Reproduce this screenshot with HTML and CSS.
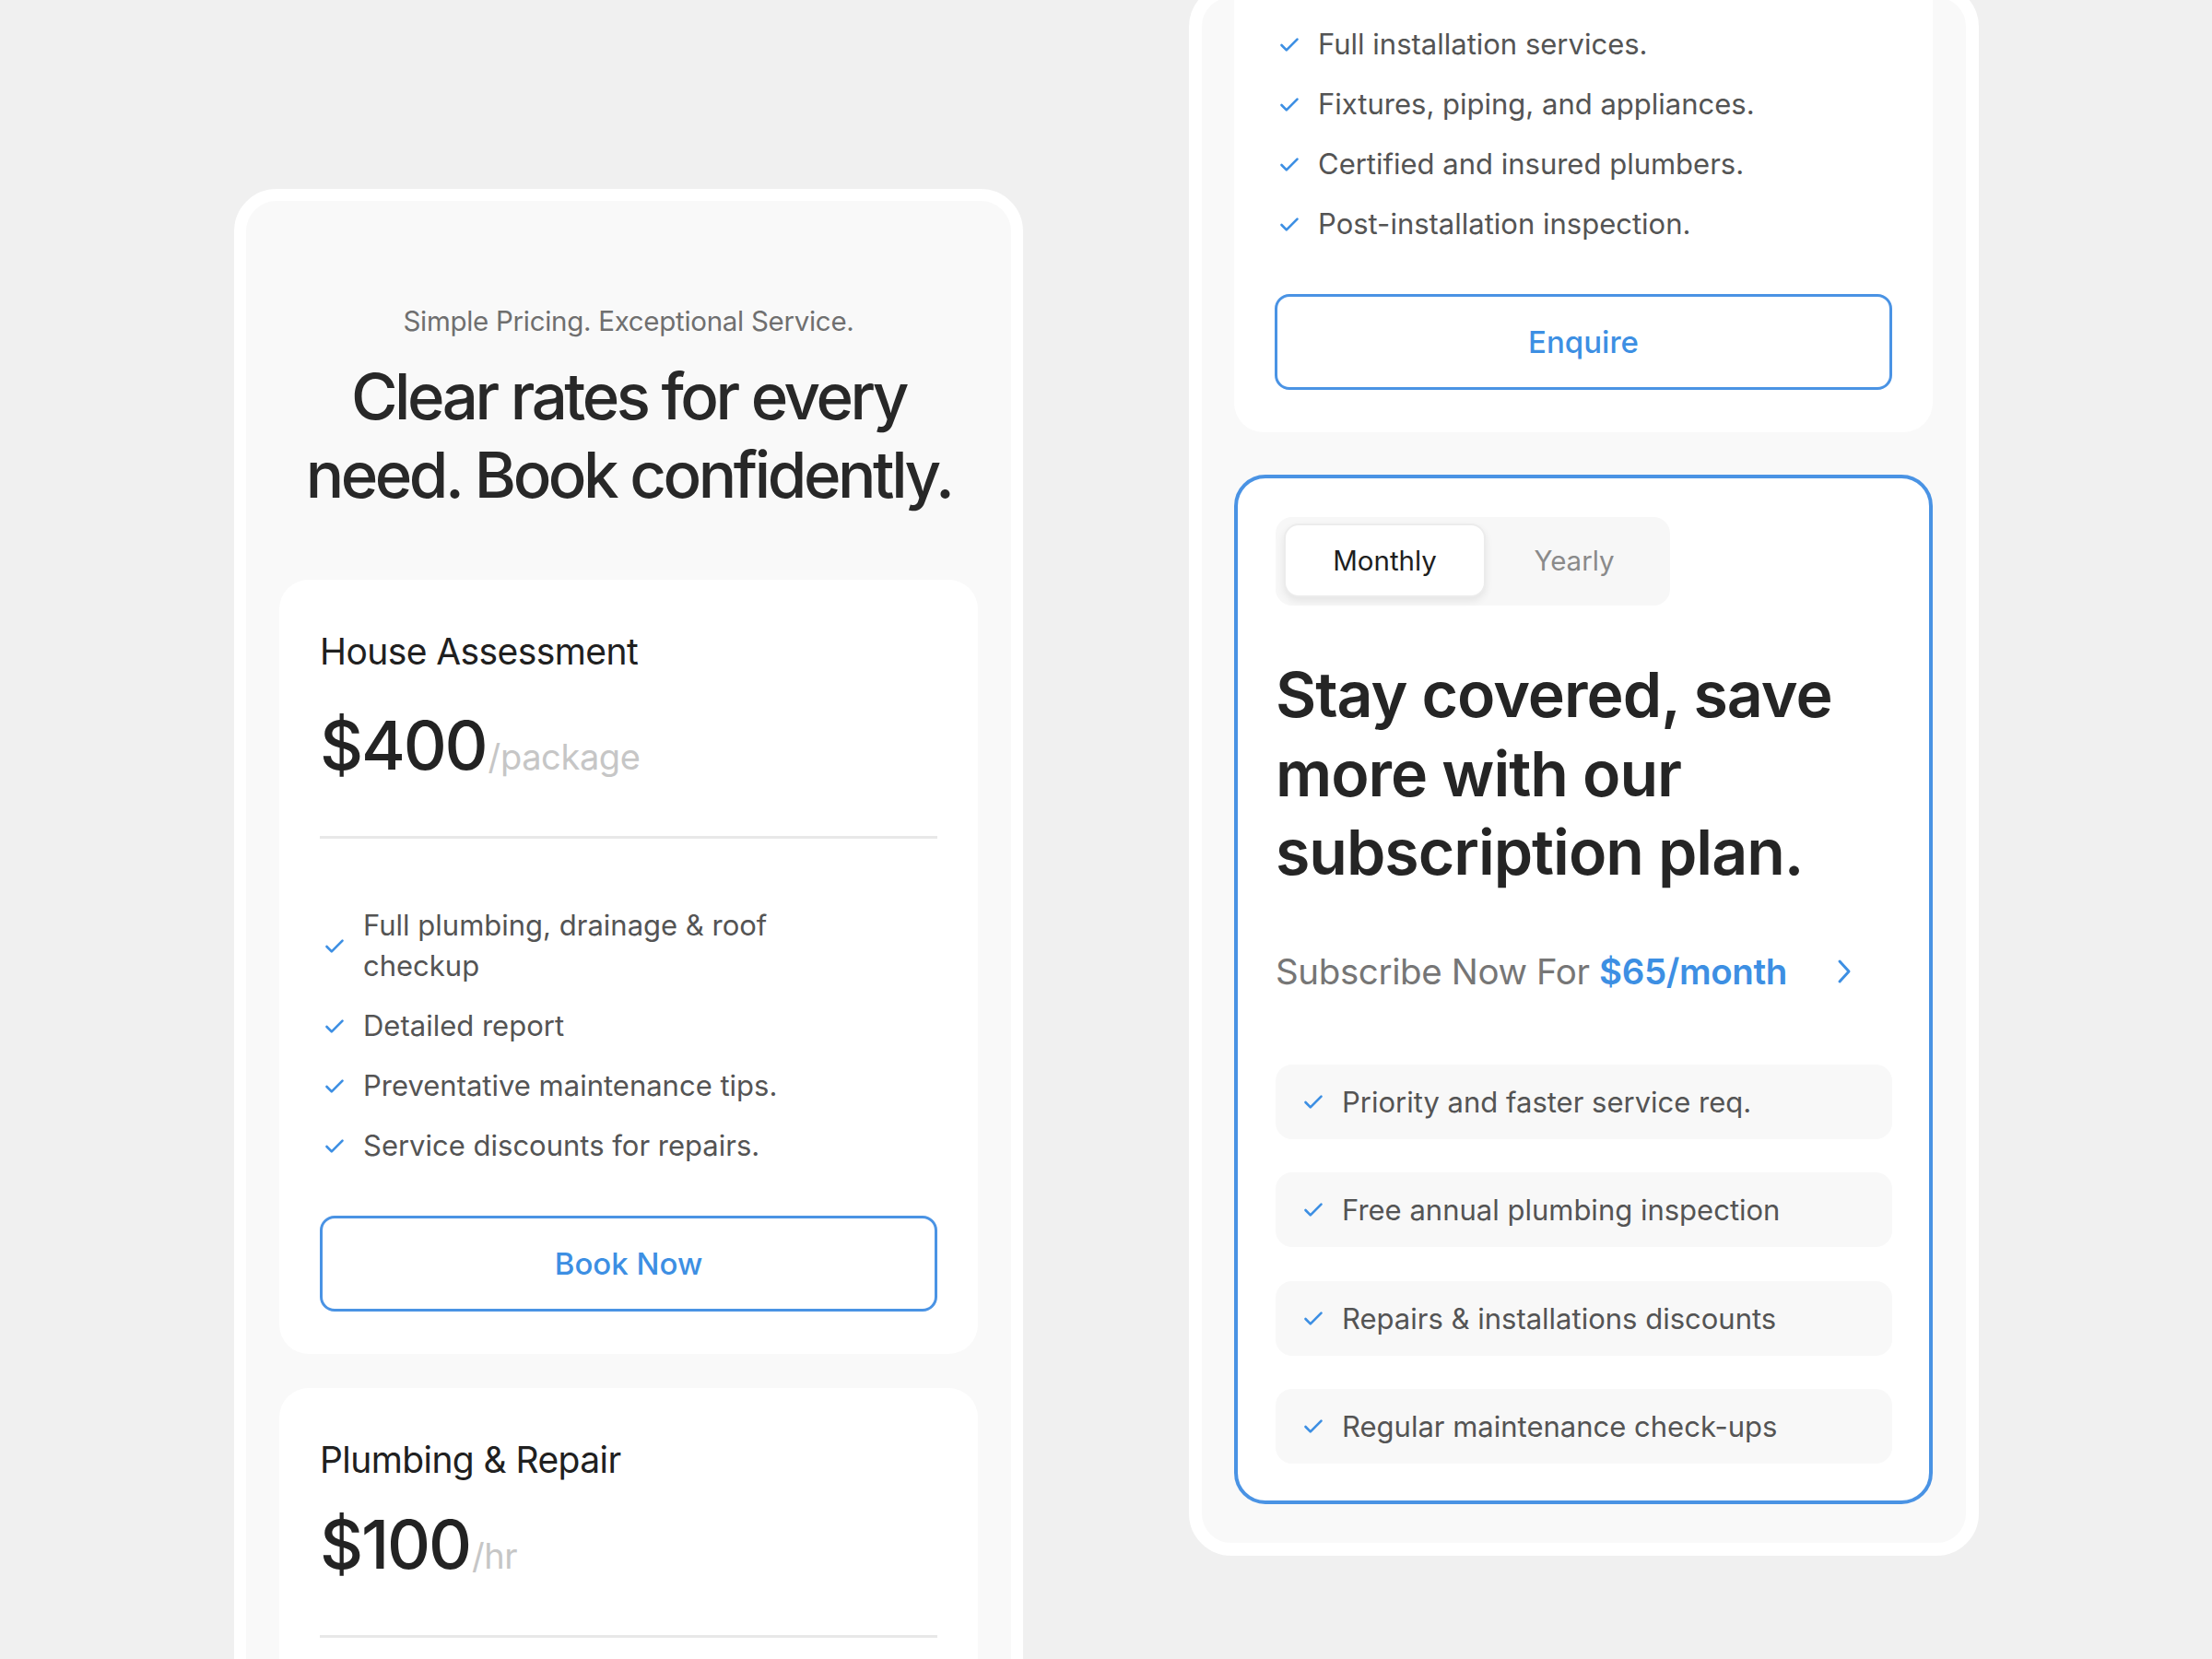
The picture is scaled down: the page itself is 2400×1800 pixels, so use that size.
FILE: index.html
```html
<!DOCTYPE html>
<html lang="en">
<head>
<meta charset="utf-8">
<title>Pricing</title>
<link rel="stylesheet" href="styles.css">
</head>
<body>
<div class="stage">
  <section class="phone phone-left">
    <header class="intro">
      <p class="eyebrow">Simple Pricing. Exceptional Service.</p>
      <h1 class="headline">Clear rates for every<br>need. Book confidently.</h1>
    </header>
    <div class="card-list">
      <article class="card">
        <h2 class="card-title">House Assessment</h2>
        <p class="price">$400<span class="unit">/package</span></p>
        <hr class="divider">
        <ul class="features">
          <li><svg class="check" viewBox="0 0 20 16"><path d="M2 8.5l5 5L18 2.5"/></svg><span class="feat-text">Full plumbing, drainage &amp; roof checkup</span></li>
          <li><svg class="check" viewBox="0 0 20 16"><path d="M2 8.5l5 5L18 2.5"/></svg><span class="feat-text">Detailed report</span></li>
          <li><svg class="check" viewBox="0 0 20 16"><path d="M2 8.5l5 5L18 2.5"/></svg><span class="feat-text">Preventative maintenance tips.</span></li>
          <li><svg class="check" viewBox="0 0 20 16"><path d="M2 8.5l5 5L18 2.5"/></svg><span class="feat-text">Service discounts for repairs.</span></li>
        </ul>
        <button class="btn-outline">Book Now</button>
      </article>
      <article class="card card-compact">
        <h2 class="card-title">Plumbing &amp; Repair</h2>
        <p class="price">$100<span class="unit">/hr</span></p>
        <hr class="divider">
      </article>
    </div>
  </section>

  <section class="phone phone-right">
    <div class="card-list">
      <article class="card card-top">
        <ul class="features">
          <li><svg class="check" viewBox="0 0 20 16"><path d="M2 8.5l5 5L18 2.5"/></svg><span class="feat-text">Full installation services.</span></li>
          <li><svg class="check" viewBox="0 0 20 16"><path d="M2 8.5l5 5L18 2.5"/></svg><span class="feat-text">Fixtures, piping, and appliances.</span></li>
          <li><svg class="check" viewBox="0 0 20 16"><path d="M2 8.5l5 5L18 2.5"/></svg><span class="feat-text">Certified and insured plumbers.</span></li>
          <li><svg class="check" viewBox="0 0 20 16"><path d="M2 8.5l5 5L18 2.5"/></svg><span class="feat-text">Post-installation inspection.</span></li>
        </ul>
        <button class="btn-outline">Enquire</button>
      </article>

      <article class="plan-card">
        <div class="toggle">
          <span class="toggle-opt is-active">Monthly</span>
          <span class="toggle-opt">Yearly</span>
        </div>
        <h2 class="plan-heading">Stay covered, save<br>more with our<br>subscription plan.</h2>
        <a class="subscribe">
          <span class="subscribe-text">Subscribe Now For <strong class="subscribe-price">$65/month</strong></span>
          <svg class="chevron" viewBox="0 0 16 28"><path d="M3 3l10 11L3 25"/></svg>
        </a>
        <ul class="plan-features">
          <li><svg class="check" viewBox="0 0 20 16"><path d="M2 8.5l5 5L18 2.5"/></svg>Priority and faster service req.</li>
          <li><svg class="check" viewBox="0 0 20 16"><path d="M2 8.5l5 5L18 2.5"/></svg>Free annual plumbing inspection</li>
          <li><svg class="check" viewBox="0 0 20 16"><path d="M2 8.5l5 5L18 2.5"/></svg>Repairs &amp; installations discounts</li>
          <li><svg class="check" viewBox="0 0 20 16"><path d="M2 8.5l5 5L18 2.5"/></svg>Regular maintenance check-ups</li>
        </ul>
      </article>
    </div>
  </section>
</div>
</body>
</html>
```

FILE: styles.css
```css
* { box-sizing: border-box; }

html, body {
  margin: 0;
  padding: 0;
  background: #f0f0f0;
}

body {
  font-family: Inter, "Noto Sans", sans-serif;
  color: #2a2a2a;
}

.stage {
  width: 2400px;
  height: 1800px;
  overflow: hidden;
  display: flex;
  align-items: flex-start;
  gap: 180px;
  padding-left: 254px;
}

.phone {
  width: 856px;
  flex: none;
  background: #f9f9f9;
  border: 13px solid #ffffff;
  border-radius: 46px;
  padding: 0 36px;
}

.phone-left {
  margin-top: 205px;
  padding-top: 112px;
}

.phone-right {
  align-self: flex-end;
  margin-bottom: 112px;
  padding-bottom: 42px;
  width: 857px;
  border-width: 14px;
  padding-left: 35px;
}

/* intro */
.intro {
  text-align: center;
  margin-bottom: 71px;
}

.eyebrow {
  margin: 0;
  font-size: 29.5px;
  line-height: 36px;
  color: #6f6f6f;
  letter-spacing: -0.01em;
}

.headline {
  margin: 22px 0 0;
  font-size: 69px;
  line-height: 85px;
  font-weight: 500;
  letter-spacing: -0.05em;
  color: #282828;
}

/* cards */
.card-list {
  display: flex;
  flex-direction: column;
  gap: 37px;
}

.card {
  background: #ffffff;
  border-radius: 32px;
  padding: 56px 44px 46px;
}

.card-compact { padding-bottom: 200px; }

.card-top {
  padding-top: 29px;
  border-top-left-radius: 0;
  border-top-right-radius: 0;
}

.card-top .features { margin-top: 0; }

.card-title {
  margin: 0;
  font-size: 39px;
  line-height: 44px;
  font-weight: 400;
  color: #202020;
  letter-spacing: -0.015em;
}

.price {
  margin: 36px 0 0;
  font-size: 73px;
  line-height: 88px;
  font-weight: 500;
  letter-spacing: -0.03em;
  color: #232323;
}

.card-compact .price { margin-top: 26px; }

.unit {
  font-size: 38px;
  font-weight: 400;
  letter-spacing: -0.01em;
  color: #c6c6c6;
  margin-left: 2px;
}

.divider {
  border: 0;
  border-top: 3px solid #e8e8e8;
  margin: 42px 0 0;
}

.features {
  list-style: none;
  margin: 72px 0 0;
  padding: 0;
  display: flex;
  flex-direction: column;
  gap: 21px;
}

.features li {
  display: flex;
  align-items: center;
  gap: 20px;
  padding-left: 5px;
  font-size: 31px;
  line-height: 44px;
  color: #545454;
}

.feat-text { max-width: 500px; }

.check {
  width: 22px;
  height: 17px;
  flex: none;
  fill: none;
  stroke: #3d8fe3;
  stroke-width: 2.5;
  stroke-linecap: round;
  stroke-linejoin: round;
}

.btn-outline {
  display: block;
  width: 100%;
  height: 104px;
  margin-top: 54px;
  background: #ffffff;
  border: 3px solid #4a93e4;
  border-radius: 16px;
  font-family: inherit;
  font-size: 33px;
  font-weight: 500;
  color: #3d8fe3;
}

/* plan card */
.plan-card {
  margin-top: 9px;
  background: #ffffff;
  border: 4px solid #4a93e4;
  border-radius: 34px;
  padding: 42px 40px 40px 41px;
}

.toggle {
  display: inline-flex;
  padding: 7px 8px 9px 9px;
  background: #f7f7f7;
  border-radius: 18px;
}

.toggle-opt {
  width: 192px;
  height: 80px;
  display: flex;
  align-items: center;
  justify-content: center;
  font-size: 29.5px;
  color: #8a8a8a;
}

.toggle-opt.is-active {
  width: 219px;
  background: #ffffff;
  color: #1e1e1e;
  border: 2px solid #ececec;
  border-radius: 16px;
  box-shadow: 0 4px 8px rgba(0, 0, 0, 0.08);
}

.plan-heading {
  margin: 54px 0 0;
  font-size: 68px;
  line-height: 85.5px;
  font-weight: 600;
  letter-spacing: -0.015em;
  color: #252525;
}

.subscribe {
  display: flex;
  align-items: center;
  gap: 54px;
  margin-top: 61px;
  font-size: 38.5px;
  line-height: 50px;
  color: #767676;
  letter-spacing: -0.01em;
}

.subscribe-price {
  color: #3d8fe3;
  font-weight: 600;
}

.chevron {
  width: 16px;
  height: 28px;
  fill: none;
  stroke: #3d8fe3;
  stroke-width: 3;
  stroke-linecap: round;
  stroke-linejoin: round;
}

.plan-features {
  list-style: none;
  margin: 76px 0 0;
  padding: 0;
  display: flex;
  flex-direction: column;
  gap: 36.5px;
}

.plan-features li {
  display: flex;
  align-items: center;
  gap: 20px;
  height: 81px;
  padding-left: 30px;
  background: #f8f8f8;
  border-radius: 18px;
  font-size: 31px;
  color: #545454;
}
```
